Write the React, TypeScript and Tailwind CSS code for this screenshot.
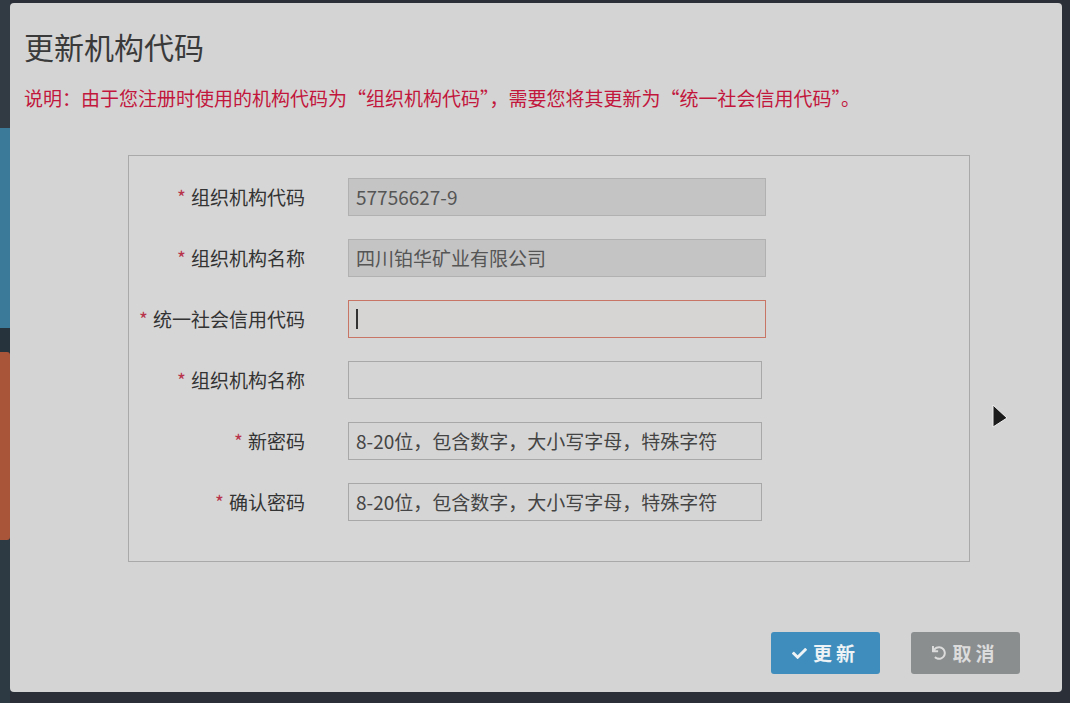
import { FaCheck, FaUndo } from "react-icons/fa";

const rows = [
  { label: "组织机构代码", value: "57756627-9", kind: "disabled" },
  { label: "组织机构名称", value: "四川铂华矿业有限公司", kind: "disabled" },
  { label: "统一社会信用代码", value: "", kind: "focus" },
  { label: "组织机构名称", value: "", kind: "normal" },
  { label: "新密码", value: "8-20位，包含数字，大小写字母，特殊字符", kind: "normal" },
  { label: "确认密码", value: "8-20位，包含数字，大小写字母，特殊字符", kind: "normal" },
];

export default function App() {
  return (
    <div
      className="relative flex w-[1070px] h-[703px] overflow-hidden bg-[#2b3038]"
      style={{ fontFamily: '"Noto Sans CJK SC", "Noto Sans", sans-serif' }}
    >
      {/* page behind the modal */}
      <div className="flex flex-col w-[10px] shrink-0">
        <div className="h-[128px] bg-[#323a44]" />
        <div className="h-[200px] bg-[#3b7a98]" />
        <div className="h-[24px] bg-[#26333d]" />
        <div className="h-[188px] bg-[#a9553a] rounded-r-[3px]" />
        <div className="flex-1 bg-[#2e3a43]" />
      </div>

      <div className="flex flex-col flex-1 mt-[3px] mr-[8px] mb-[11px] bg-[#d4d4d4] rounded-[4px] pl-[14px] pt-[25px]">
        <div className="text-[30px] leading-[36px] text-[#3a3a3a]">更新机构代码</div>
        <div className="mt-[21px] text-[19px] leading-[26px] text-[#c2163c]">
          说明：由于您注册时使用的机构代码为“组织机构代码”，需要您将其更新为“统一社会信用代码”。
        </div>

        <div className="mt-[44px] ml-[104px] w-[842px] border border-[#a9a9a9] bg-[#d6d6d6] pt-[22px] pb-[40px] flex flex-col gap-[23px]">
          {rows.map((r, i) => (
            <div key={i} className="flex items-center gap-[43px]">
              <div className="w-[176px] text-right text-[19px] text-[#333]">
                <span className="text-[#b8344a] mr-[5px]">*</span>
                {r.label}
              </div>
              <div
                className={
                  r.kind === "disabled"
                    ? "w-[418px] h-[38px] flex items-center px-[7px] border border-[#b1b1b1] bg-[#c4c4c4] text-[19px] text-[#555]"
                    : r.kind === "focus"
                    ? "w-[418px] h-[38px] flex items-center px-[7px] border border-[#c97565] bg-[#d6d5d4] text-[19px] text-[#555]"
                    : "w-[414px] h-[38px] flex items-center px-[7px] border border-[#a8a8a8] bg-[#d5d5d5] text-[19px] text-[#444]"
                }
              >
                {r.kind === "focus" ? <span className="w-[2px] h-[20px] bg-[#333]" /> : r.value}
              </div>
            </div>
          ))}
        </div>

        <div className="flex justify-end gap-[31px] mt-[70px] pr-[42px]">
          <button className="flex items-center justify-center gap-[6px] w-[109px] h-[42px] rounded-[3px] bg-[#3f8dbc] text-[#eef3f6] text-[19px] font-bold tracking-[4px]">
            <FaCheck className="w-[15px] h-[15px]" />
            更新
          </button>
          <button className="flex items-center justify-center gap-[6px] w-[109px] h-[42px] rounded-[3px] bg-[#8b8e8f] text-[#dcdcdc] text-[19px] font-bold tracking-[4px]">
            <FaUndo className="w-[14px] h-[14px]" />
            取消
          </button>
        </div>
      </div>

      {/* mouse pointer */}
      <svg className="absolute left-[991px] top-[404px]" width="18" height="26" viewBox="0 0 18 26">
        <path d="M2 1 L2 23 L16 14 Z" fill="#1c1c1c" stroke="#f0f0f0" strokeWidth="1" />
      </svg>
    </div>
  );
}
